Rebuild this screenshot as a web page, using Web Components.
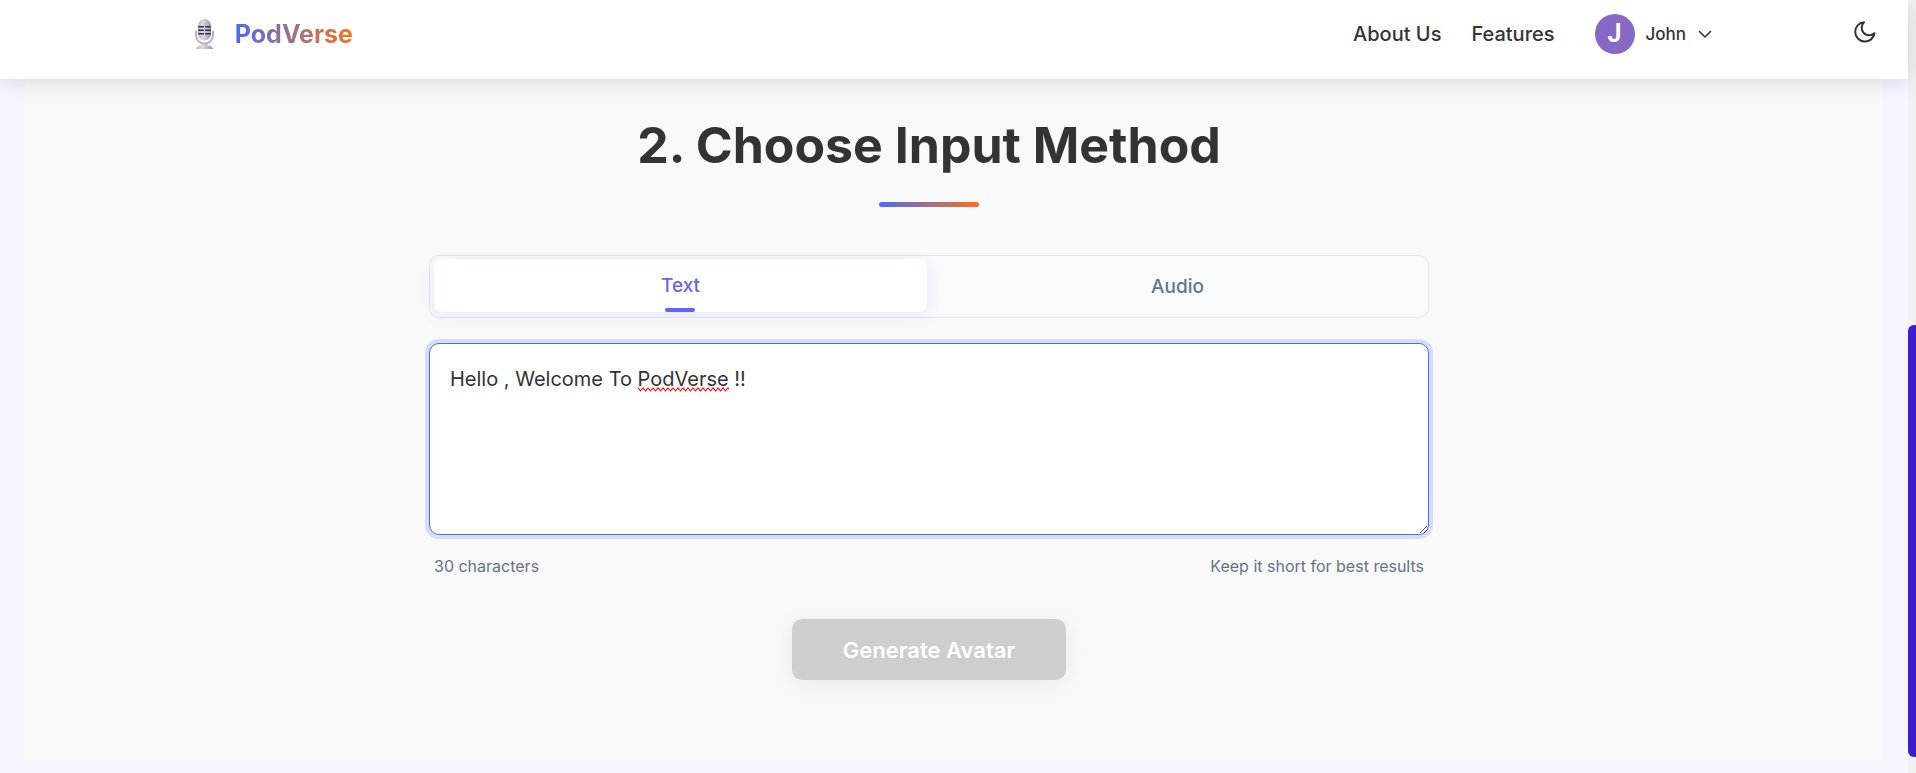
<!DOCTYPE html>
<html lang="en">
<head>
<meta charset="utf-8">
<title>PodVerse</title>
<style>
html,body{margin:0;height:100%}
body{font-family:Inter,"Liberation Sans",sans-serif;color:#333;background:#f7f5ff;overflow:hidden}
</style>
</head>
<body>
<pod-shell>
  <pod-header slot="header"></pod-header>
  <pod-section heading="2. Choose Input Method">
    <pod-tabs></pod-tabs>
    <pod-editor></pod-editor>
    <pod-generate>Generate Avatar</pod-generate>
  </pod-section>
</pod-shell>
<script>
const define = (name, html, setup) => customElements.define(name, class extends HTMLElement {
  constructor() {
    super();
    this.attachShadow({mode: 'open'}).innerHTML = html;
  }
  connectedCallback() { if (setup) setup(this, this.shadowRoot); }
});

define('pod-shell', `
<style>
:host{display:grid;grid-template-columns:minmax(0,1fr) 8px;height:100vh}
.page{display:flex;flex-direction:column;min-height:0}
main{flex:1;padding:0 25px 13px;display:flex;flex-direction:column}
.track{background:#f1f1f1;display:grid;grid-template-rows:325fr 432fr 16fr}
.thumb{grid-row:2;background:#3d1dcb;border-radius:6px 0 0 6px}
</style>
<div class="page"><slot name="header"></slot><main><slot></slot></main></div>
<div class="track"><div class="thumb"></div></div>`);

define('pod-header', `
<style>
:host{display:block;position:relative;z-index:2;background:#fff;box-shadow:0 4px 20px rgba(0,0,0,.12)}
header{display:flex;align-items:center;height:54px;padding:7px 31px 18px 10%}
.brand{display:flex;align-items:center;gap:17px;text-decoration:none;margin-right:auto}
.brand svg{width:27px;height:32px;display:block}
.name{font-size:25px;font-weight:700;line-height:32px;background:linear-gradient(90deg,#4a6cf7,#f97316);-webkit-background-clip:text;background-clip:text;color:transparent}
nav{display:flex;gap:30px;margin-right:40px}
nav a{font-size:20px;line-height:32px;font-weight:500;color:#333;text-decoration:none}
button{font:inherit;color:inherit;background:none;border:0;padding:0;cursor:pointer}
.user{display:flex;align-items:center;gap:11px;font-size:17px;font-weight:500;margin-right:140px}
.avatar{width:40px;height:40px;border-radius:50%;background:#8768c4;color:#fff;font:700 25px/40px Roboto,sans-serif}
.user svg{width:16px;height:16px}
.theme svg{width:24px;height:24px;display:block}
.theme{padding-bottom:4px}
</style>
<header>
<a class="brand" href="#">
<svg viewBox="0 0 27 32" aria-hidden="true">
<defs><linearGradient id="m" x1="0" x2="1"><stop stop-color="#bdb7c5"/><stop offset=".4" stop-color="#dcd8e2"/><stop offset="1" stop-color="#9d93a8"/></linearGradient></defs>
<path d="M10.500 25h6v2.500q5 0 5.500 3.500H5q.5-3.500 5.500-3.500z" fill="url(#m)"/>
<rect x="7" y="1" width="13" height="21.500" rx="6.500" fill="url(#m)"/>
<path d="M5 13.500v4a8.500 8 0 0 0 17 0v-4" fill="none" stroke="#b9b3c2" stroke-width="2" stroke-linecap="round"/>
<path d="M7 8.700h6M14 8.700h6M7 12.200h6M14 12.200h6M7 15.700h6M14 15.700h6" stroke="#3d3050" stroke-width="1.500"/>
</svg>
<span class="name">PodVerse</span></a>
<nav><a href="#about">About Us</a><a href="#features">Features</a></nav>
<button class="user"><span class="avatar">J</span><span>John</span>
<svg viewBox="0 0 16 16" fill="none" stroke="#333" stroke-width="1.600" stroke-linecap="round" stroke-linejoin="round"><path d="M2.500 5.500l5.500 5.500 5.500-5.500"/></svg></button>
<button class="theme" aria-label="Toggle dark mode"><svg viewBox="0 0 24 24" fill="none" stroke="#333" stroke-width="2" stroke-linecap="round" stroke-linejoin="round"><path d="M21.500 13.200A9.700 9.700 0 1 1 11 2.200 7.600 7.600 0 0 0 21.500 13.200z"/></svg></button>
</header>`);

define('pod-section', `
<style>
:host{display:block;flex:1;background:#f9f9f9}
section{max-width:1000px;margin:0 auto;padding:36px 0 0}
.wrap{padding-right:50px}
h2{margin:0;text-align:center;font-size:50px;line-height:60px;font-weight:700;color:#333}
.bar{width:100px;height:5px;border-radius:3px;background:linear-gradient(90deg,#4a6cf7,#f97316);margin:27px auto 48px}
</style>
<div class="wrap"><section><h2></h2><div class="bar"></div><slot></slot></section></div>`,
(el, root) => { root.querySelector('h2').textContent = el.getAttribute('heading'); });

define('pod-tabs', `
<style>
:host{display:block;margin-bottom:25px}
div{display:grid;grid-template-columns:1fr 1fr;gap:4px;padding:4px;border:1px solid #e2e8f0;border-radius:10px;background:#f8fafc}
button{font:500 19px/29px Inter,sans-serif;color:#64748b;background:none;border:0;border-radius:8px;padding:12px;height:53px}
.on{position:relative;top:-1px;background:#fff;color:#6366f1;box-shadow:0 4px 15px rgba(99,102,241,.12)}
.on::after{content:"";position:absolute;left:50%;bottom:0;width:30px;height:4px;margin-left:-16px;border-radius:2px;background:#6366f1}
</style>
<div role="tablist"><button role="tab" class="on" aria-selected="true">Text</button><button role="tab" aria-selected="false">Audio</button></div>`);

define('pod-editor', `
<style>
:host{display:block}
.box{position:relative}
textarea{display:block;box-sizing:border-box;width:100%;height:192px;padding:20px;border:1px solid #4a6cf7;border-radius:10px;outline:0;box-shadow:0 0 0 4px rgba(74,108,247,.2);background:#fff;color:#333;font:400 20px/30px Inter,sans-serif;resize:vertical}
.squiggle{position:absolute;left:209px;top:44px;width:91px;height:5px;pointer-events:none}
.meta{display:flex;justify-content:space-between;padding:19px 5px 0;font-size:16px;line-height:24px;color:#64748b}
</style>
<div class="box"><textarea aria-label="Text for the avatar" spellcheck="false">Hello , Welcome To PodVerse !!</textarea>
<svg class="squiggle" aria-hidden="true"><defs><pattern id="w" width="5" height="5" patternUnits="userSpaceOnUse"><path d="M-1 .1L0 1 2.500 4 5 1 6 .1" fill="none" stroke="red" stroke-width="1.100"/></pattern></defs><rect width="91" height="5" fill="url(#w)"/></svg></div>
<div class="meta"><span>30 characters</span><span>Keep it short for best results</span></div>`);

define('pod-generate', `
<style>
:host{display:flex;justify-content:center;margin-top:41px}
button{font:600 22px/29px Inter,sans-serif;color:#fff;background:#cecece;border:0;border-radius:10px;padding:17px 51px 15px;box-shadow:0 4px 24px rgba(0,0,0,.07)}
</style>
<button disabled><slot></slot></button>`);
</script>
</body>
</html>
